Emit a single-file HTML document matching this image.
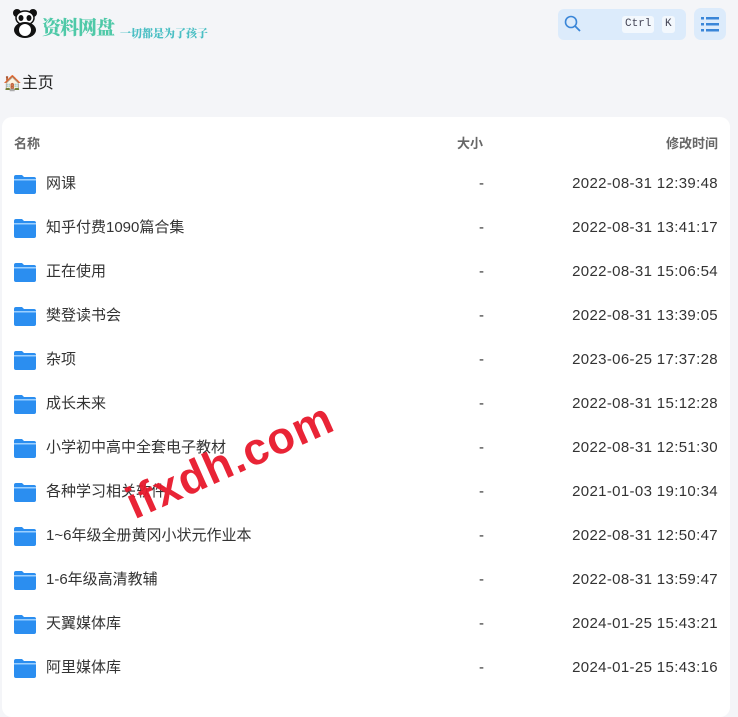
<!DOCTYPE html>
<html><head><meta charset="utf-8"><style>
*{margin:0;padding:0;box-sizing:border-box}
body{width:738px;height:679px;overflow:hidden;background:#f4f5f8;font-family:"Liberation Sans","Noto Sans CJK SC",sans-serif;position:relative;color:#333}
.logo{position:absolute;left:12px;top:8px}
.title{position:absolute;left:42px;top:13px;font-family:"Noto Serif CJK SC",serif;font-weight:900;font-size:19px;color:#4fc9a8;letter-spacing:-1px}
.slogan{position:absolute;left:120px;top:25px;font-family:"Noto Serif CJK SC",serif;font-weight:900;font-size:11px;color:#4bbfc4}
.search{position:absolute;left:558px;top:9px;width:128px;height:31px;background:#dcebfb;border-radius:6px}
.kbd{position:absolute;top:7px;height:17px;background:#f3f8fd;border-radius:3px;font-family:"Liberation Mono",monospace;font-size:11px;color:#445;line-height:17px;padding:0 3px}
.menu{position:absolute;left:694px;top:8px;width:32px;height:32px;background:#dcebfb;border-radius:7px}
.crumb{position:absolute;left:3px;top:69px;font-size:16px;color:#222}
.card{position:absolute;left:2px;top:117px;width:728px;height:600px;background:#fff;border-radius:10px}
.hd{position:absolute;top:133px;font-size:13px;color:#666;font-weight:bold}
.row{position:absolute;left:0;width:738px;height:44px;font-size:15px;color:#333}
.row svg{position:absolute;left:14px;top:-10px}
.row .n{position:absolute;left:46px;top:-10px;line-height:20px}
.row .s{position:absolute;left:479px;top:-10px;line-height:20px}
.row .t{position:absolute;right:20px;top:-10px;line-height:20px;letter-spacing:0.35px}
.wm{position:absolute;left:118px;top:482px;font-size:45px;font-weight:bold;color:#e8192c;transform:rotate(-24deg);transform-origin:left top;letter-spacing:1px;opacity:.95}
</style></head><body>
<svg class="logo" width="26" height="30" viewBox="0 0 26 30"><circle cx="5" cy="5" r="4" fill="#111"/><circle cx="21" cy="5" r="4" fill="#111"/><ellipse cx="13" cy="10" rx="9" ry="7" fill="#fff" stroke="#111" stroke-width="1.5"/><ellipse cx="9" cy="10" rx="2.5" ry="3" fill="#111"/><ellipse cx="17" cy="10" rx="2.5" ry="3" fill="#111"/><ellipse cx="13" cy="22" rx="11" ry="8" fill="#111"/><ellipse cx="13" cy="22" rx="6" ry="6" fill="#fff"/></svg>
<div class="title">资料网盘</div>
<div class="slogan">一切都是为了孩子</div>
<div class="search"><svg style="position:absolute;left:6px;top:6px" width="18" height="18" viewBox="0 0 18 18"><circle cx="7" cy="7" r="5.5" fill="none" stroke="#3a86d8" stroke-width="1.6"/><path d="M11 11l5 5" stroke="#3a86d8" stroke-width="1.8"/></svg><span class="kbd" style="left:64px">Ctrl</span><span class="kbd" style="left:104px">K</span></div>
<div class="menu"><svg style="position:absolute;left:7px;top:8px" width="18" height="16" viewBox="0 0 18 16"><g fill="#3a86d8"><rect x="0" y="1" width="3" height="2.5"/><rect x="5" y="1" width="13" height="2.5"/><rect x="0" y="7" width="3" height="2.5"/><rect x="5" y="7" width="13" height="2.5"/><rect x="0" y="13" width="3" height="2.5"/><rect x="5" y="13" width="13" height="2.5"/></g></svg></div>
<div class="crumb"><span style="font-size:15px">🏠</span>主页</div>
<div class="card"></div>
<div class="hd" style="left:14px">名称</div>
<div class="hd" style="left:457px">大小</div>
<div class="hd" style="right:20px">修改时间</div>
<div class="row" style="top:184px"><svg width="22" height="20" viewBox="0 0 22 20"><path d="M0 3a2 2 0 0 1 2-2h6l2 2h10a2 2 0 0 1 2 2v13a2 2 0 0 1-2 2H2a2 2 0 0 1-2-2z" fill="#2b8ef0"/><rect x="0" y="5" width="22" height="1.5" fill="#9cd0ff"/></svg><span class="n">网课</span><span class="s">-</span><span class="t">2022-08-31 12:39:48</span></div>
<div class="row" style="top:228px"><svg width="22" height="20" viewBox="0 0 22 20"><path d="M0 3a2 2 0 0 1 2-2h6l2 2h10a2 2 0 0 1 2 2v13a2 2 0 0 1-2 2H2a2 2 0 0 1-2-2z" fill="#2b8ef0"/><rect x="0" y="5" width="22" height="1.5" fill="#9cd0ff"/></svg><span class="n">知乎付费1090篇合集</span><span class="s">-</span><span class="t">2022-08-31 13:41:17</span></div>
<div class="row" style="top:272px"><svg width="22" height="20" viewBox="0 0 22 20"><path d="M0 3a2 2 0 0 1 2-2h6l2 2h10a2 2 0 0 1 2 2v13a2 2 0 0 1-2 2H2a2 2 0 0 1-2-2z" fill="#2b8ef0"/><rect x="0" y="5" width="22" height="1.5" fill="#9cd0ff"/></svg><span class="n">正在使用</span><span class="s">-</span><span class="t">2022-08-31 15:06:54</span></div>
<div class="row" style="top:316px"><svg width="22" height="20" viewBox="0 0 22 20"><path d="M0 3a2 2 0 0 1 2-2h6l2 2h10a2 2 0 0 1 2 2v13a2 2 0 0 1-2 2H2a2 2 0 0 1-2-2z" fill="#2b8ef0"/><rect x="0" y="5" width="22" height="1.5" fill="#9cd0ff"/></svg><span class="n">樊登读书会</span><span class="s">-</span><span class="t">2022-08-31 13:39:05</span></div>
<div class="row" style="top:360px"><svg width="22" height="20" viewBox="0 0 22 20"><path d="M0 3a2 2 0 0 1 2-2h6l2 2h10a2 2 0 0 1 2 2v13a2 2 0 0 1-2 2H2a2 2 0 0 1-2-2z" fill="#2b8ef0"/><rect x="0" y="5" width="22" height="1.5" fill="#9cd0ff"/></svg><span class="n">杂项</span><span class="s">-</span><span class="t">2023-06-25 17:37:28</span></div>
<div class="row" style="top:404px"><svg width="22" height="20" viewBox="0 0 22 20"><path d="M0 3a2 2 0 0 1 2-2h6l2 2h10a2 2 0 0 1 2 2v13a2 2 0 0 1-2 2H2a2 2 0 0 1-2-2z" fill="#2b8ef0"/><rect x="0" y="5" width="22" height="1.5" fill="#9cd0ff"/></svg><span class="n">成长未来</span><span class="s">-</span><span class="t">2022-08-31 15:12:28</span></div>
<div class="row" style="top:448px"><svg width="22" height="20" viewBox="0 0 22 20"><path d="M0 3a2 2 0 0 1 2-2h6l2 2h10a2 2 0 0 1 2 2v13a2 2 0 0 1-2 2H2a2 2 0 0 1-2-2z" fill="#2b8ef0"/><rect x="0" y="5" width="22" height="1.5" fill="#9cd0ff"/></svg><span class="n">小学初中高中全套电子教材</span><span class="s">-</span><span class="t">2022-08-31 12:51:30</span></div>
<div class="row" style="top:492px"><svg width="22" height="20" viewBox="0 0 22 20"><path d="M0 3a2 2 0 0 1 2-2h6l2 2h10a2 2 0 0 1 2 2v13a2 2 0 0 1-2 2H2a2 2 0 0 1-2-2z" fill="#2b8ef0"/><rect x="0" y="5" width="22" height="1.5" fill="#9cd0ff"/></svg><span class="n">各种学习相关软件</span><span class="s">-</span><span class="t">2021-01-03 19:10:34</span></div>
<div class="row" style="top:536px"><svg width="22" height="20" viewBox="0 0 22 20"><path d="M0 3a2 2 0 0 1 2-2h6l2 2h10a2 2 0 0 1 2 2v13a2 2 0 0 1-2 2H2a2 2 0 0 1-2-2z" fill="#2b8ef0"/><rect x="0" y="5" width="22" height="1.5" fill="#9cd0ff"/></svg><span class="n">1~6年级全册黄冈小状元作业本</span><span class="s">-</span><span class="t">2022-08-31 12:50:47</span></div>
<div class="row" style="top:580px"><svg width="22" height="20" viewBox="0 0 22 20"><path d="M0 3a2 2 0 0 1 2-2h6l2 2h10a2 2 0 0 1 2 2v13a2 2 0 0 1-2 2H2a2 2 0 0 1-2-2z" fill="#2b8ef0"/><rect x="0" y="5" width="22" height="1.5" fill="#9cd0ff"/></svg><span class="n">1-6年级高清教辅</span><span class="s">-</span><span class="t">2022-08-31 13:59:47</span></div>
<div class="row" style="top:624px"><svg width="22" height="20" viewBox="0 0 22 20"><path d="M0 3a2 2 0 0 1 2-2h6l2 2h10a2 2 0 0 1 2 2v13a2 2 0 0 1-2 2H2a2 2 0 0 1-2-2z" fill="#2b8ef0"/><rect x="0" y="5" width="22" height="1.5" fill="#9cd0ff"/></svg><span class="n">天翼媒体库</span><span class="s">-</span><span class="t">2024-01-25 15:43:21</span></div>
<div class="row" style="top:668px"><svg width="22" height="20" viewBox="0 0 22 20"><path d="M0 3a2 2 0 0 1 2-2h6l2 2h10a2 2 0 0 1 2 2v13a2 2 0 0 1-2 2H2a2 2 0 0 1-2-2z" fill="#2b8ef0"/><rect x="0" y="5" width="22" height="1.5" fill="#9cd0ff"/></svg><span class="n">阿里媒体库</span><span class="s">-</span><span class="t">2024-01-25 15:43:16</span></div>
<div class="wm">ifxdh.com</div>
</body></html>
